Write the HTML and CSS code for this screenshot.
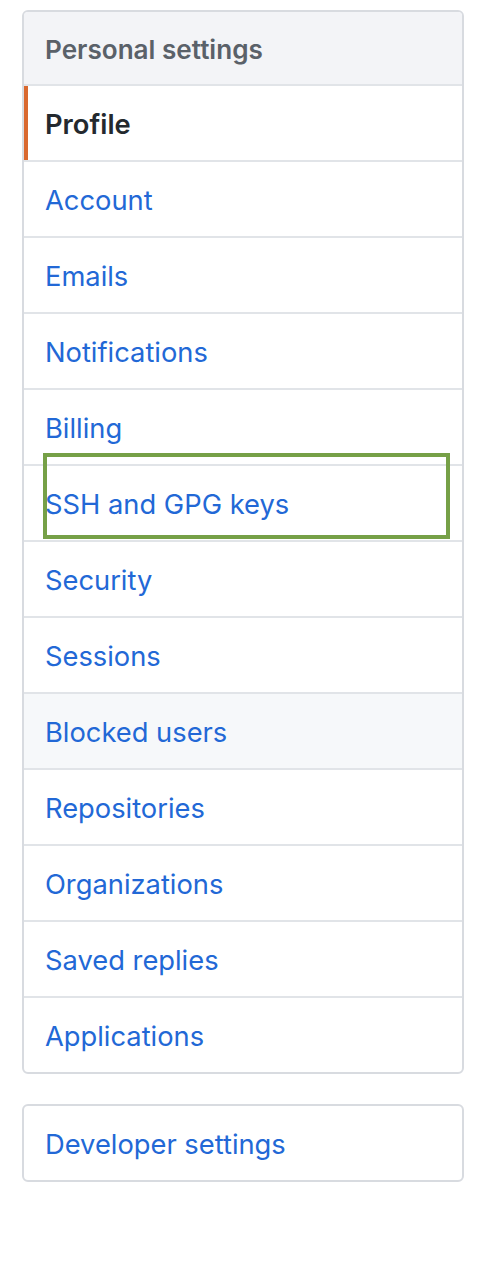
FILE: index.html
```html
<!DOCTYPE html>
<html>
<head>
<meta charset="utf-8">
<link rel="stylesheet" href="styles.css">
</head>
<body>
<div class="page">
  <nav class="menu">
    <div class="menu-heading">Personal settings</div>
    <a class="menu-item selected">Profile</a>
    <a class="menu-item">Account</a>
    <a class="menu-item">Emails</a>
    <a class="menu-item">Notifications</a>
    <a class="menu-item">Billing</a>
    <a class="menu-item">SSH and GPG keys</a>
    <a class="menu-item">Security</a>
    <a class="menu-item">Sessions</a>
    <a class="menu-item hover">Blocked users</a>
    <a class="menu-item">Repositories</a>
    <a class="menu-item">Organizations</a>
    <a class="menu-item">Saved replies</a>
    <a class="menu-item">Applications</a>
  </nav>
  <nav class="menu">
    <a class="menu-item">Developer settings</a>
  </nav>
  <div class="highlight"></div>
</div>
</body>
</html>
```

FILE: styles.css
```css
html, body {
  margin: 0;
  padding: 0;
  background: #ffffff;
}
.page {
  position: relative;
  padding: 10px 38px 0 22px;
  display: flex;
  flex-direction: column;
  gap: 30px;
  font-family: Inter, "Liberation Sans", Arial, sans-serif;
  font-size: 27.3px;
}
.menu {
  display: flex;
  flex-direction: column;
  border: 2px solid #d8dbe0;
  border-radius: 6px;
  overflow: hidden;
  background: #fff;
}
.menu-heading {
  height: 70px;
  display: flex;
  align-items: center;
  padding: 2px 0 0 21px;
  background: #f3f4f7;
  color: #5a6169;
  font-weight: 600;
  font-size: 26.1px;
  border-bottom: 2px solid #e1e4e8;
}
.menu-item {
  position: relative;
  height: 72px;
  display: flex;
  align-items: center;
  padding: 2px 0 0 21px;
  color: #2268d6;
  text-decoration: none;
  border-bottom: 2px solid #e1e4e8;
}
.menu-item:last-child {
  border-bottom: none;
}
.menu-item.selected {
  color: #24292e;
  font-weight: 600;
}
.menu-item.selected::before {
  content: "";
  position: absolute;
  left: 0;
  top: 0;
  bottom: 0;
  width: 4px;
  background: #d9692f;
}
.menu-item.hover {
  background: #f6f8fa;
}
.highlight {
  position: absolute;
  left: 43px;
  top: 453px;
  width: 399px;
  height: 78px;
  border: 4px solid #76a047;
}
```
